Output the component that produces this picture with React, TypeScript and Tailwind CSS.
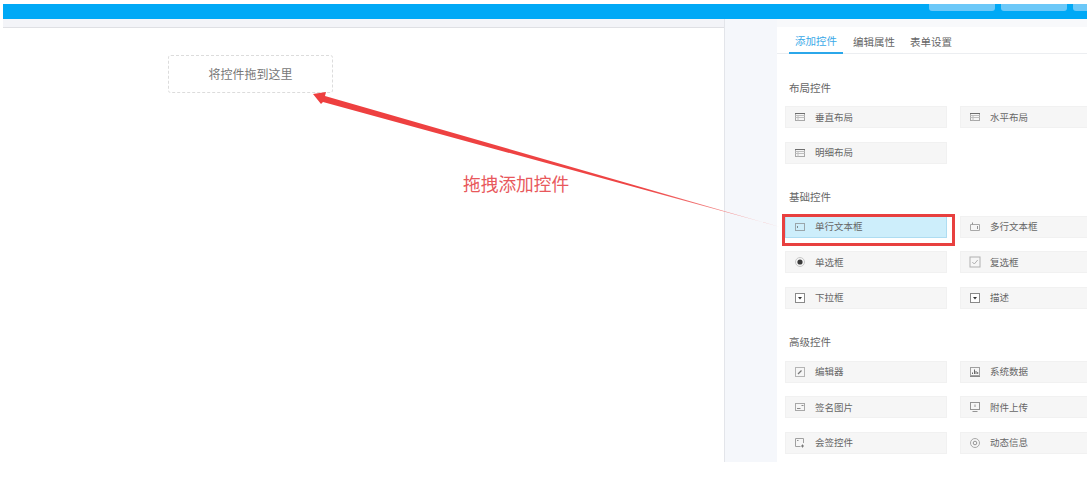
import React from "react";

type Item = { label: string; icon: string; active?: boolean };

const sections: { title: string; items: Item[] }[] = [
  {
    title: "布局控件",
    items: [
      { label: "垂直布局", icon: "table" },
      { label: "水平布局", icon: "table" },
      { label: "明细布局", icon: "table" },
    ],
  },
  {
    title: "基础控件",
    items: [
      { label: "单行文本框", icon: "input", active: true },
      { label: "多行文本框", icon: "textarea" },
      { label: "单选框", icon: "radio" },
      { label: "复选框", icon: "checkbox" },
      { label: "下拉框", icon: "select" },
      { label: "描述", icon: "select" },
    ],
  },
  {
    title: "高级控件",
    items: [
      { label: "编辑器", icon: "editor" },
      { label: "系统数据", icon: "chart" },
      { label: "签名图片", icon: "sign" },
      { label: "附件上传", icon: "monitor" },
      { label: "会签控件", icon: "countersign" },
      { label: "动态信息", icon: "target" },
    ],
  },
];

function ItemIcon({ name }: { name: string }) {
  const common = { fill: "none", stroke: "#929292", strokeWidth: 1 };
  return (
    <svg width="12" height="12" viewBox="0 0 12 12" className="shrink-0">
      {name === "table" && (
        <g {...common}>
          <rect x="1.5" y="2.5" width="9" height="7" stroke="#a8a8a8" />
          <path d="M1 2.5h10" stroke="#6e6e6e" />
          <path d="M1.5 4.5h9M1.5 6.5h9M4 4.5v5" stroke="#c0c0c0" />
        </g>
      )}
      {name === "input" && (
        <g {...common}>
          <rect x="1.5" y="2.5" width="9" height="7" stroke="#9aa6ab" />
          <path d="M3.5 5v2" stroke="#7c8a90" />
        </g>
      )}
      {name === "textarea" && (
        <g {...common}>
          <path d="M1.5 3.5h9v6h-9z" stroke="#a8a8a8" />
          <path d="M3.5 1.5v2M8.5 5v3" />
        </g>
      )}
      {name === "radio" && (
        <g>
          <circle cx="6" cy="6" r="4.5" fill="none" stroke="#c8c8c8" />
          <circle cx="6" cy="6" r="2.6" fill="#3a3a3a" />
        </g>
      )}
      {name === "checkbox" && (
        <g {...common}>
          <rect x="1" y="1" width="10" height="10" stroke="#b0b0b0" />
          <path d="M3.3 6l2 2 3.4-4" stroke="#b0b0b0" />
        </g>
      )}
      {name === "select" && (
        <g>
          <rect x="1.5" y="1.5" width="9" height="9" fill="#fff" stroke="#8a8a8a" />
          <path d="M4 5h4L6 7.5z" fill="#333" />
        </g>
      )}
      {name === "editor" && (
        <g {...common}>
          <rect x="1.5" y="1.5" width="9" height="9" stroke="#b4b4b4" />
          <path d="M4 8l3.5-3.5" stroke="#777" strokeWidth="1.2" />
        </g>
      )}
      {name === "chart" && (
        <g {...common}>
          <rect x="1.5" y="1.5" width="9" height="8" stroke="#a0a0a0" />
          <path d="M3.5 8V6.5M5.5 8V3.5M7 8V5M8.7 8V6" stroke="#666" />
          <path d="M1 10.5h10" stroke="#888" />
        </g>
      )}
      {name === "sign" && (
        <g {...common}>
          <rect x="1.5" y="2.5" width="9" height="7" stroke="#a8a8a8" />
          <path d="M3 7.5h3.5M7.5 4.5h2" stroke="#8a8a8a" />
        </g>
      )}
      {name === "monitor" && (
        <g {...common}>
          <rect x="1.5" y="1.5" width="9" height="7" stroke="#949494" />
          <path d="M6 3.5v2.5M3.5 10.5h5" stroke="#949494" />
        </g>
      )}
      {name === "countersign" && (
        <g {...common}>
          <path d="M6.5 9.5h-5v-8h8V6" stroke="#a0a0a0" />
          <path d="M8.5 7.5v3M7 9h3" stroke="#777" />
          <path d="M3 3.5h1.5" />
        </g>
      )}
      {name === "target" && (
        <g {...common}>
          <circle cx="6" cy="6" r="4.5" stroke="#a8a8a8" />
          <circle cx="6" cy="6" r="1.8" stroke="#949494" />
        </g>
      )}
    </svg>
  );
}

function ControlItem({ item }: { item: Item }) {
  return (
    <div
      className={`relative flex h-[22px] items-center border pl-[8px] ${
        item.active
          ? "border-[#aeddf2] bg-[#cdeefb]"
          : "border-[#f1f1f1] bg-[#f6f6f6]"
      }`}
    >
      <ItemIcon name={item.icon} />
      <span className="ml-[9px] text-[9.5px] text-[#666]">{item.label}</span>
      {item.active && (
        <div className="absolute -left-[4px] -top-[3px] h-[32px] w-[173px] border-[3px] border-[#e8403f]" />
      )}
    </div>
  );
}

export default function App() {
  return (
    <div className="relative h-[495px] w-[1087px] overflow-hidden bg-white pt-[4px] font-['Noto_Sans_CJK_SC','Liberation_Sans',sans-serif]">
      <div className="ml-[3px] flex h-[15px] justify-end gap-[6px] bg-[#00a9f6]">
        <div className="h-[7px] w-[66px] rounded-b-[3px] bg-[#6cc8f8]" />
        <div className="h-[7px] w-[66px] rounded-b-[3px] bg-[#6cc8f8]" />
        <div className="h-[7px] w-[14px] rounded-bl-[3px] bg-[#6cc8f8]" />
      </div>
      <div className="ml-[3px] flex h-[443px]">
        <div className="flex w-[722px] flex-col border-r border-[#e3e5ea]">
          <div className="h-[9px] border-b border-[#dfe0e4] bg-[#f3f4f8]" />
          <div className="pl-[165px] pt-[27px]">
            <div className="flex h-[38px] w-[165px] items-center justify-center rounded-[3px] border-[1.5px] border-dashed border-[#dcdcdc] text-[12px] text-[#777]">
              将控件拖到这里
            </div>
          </div>
        </div>
        <div className="w-[52px] bg-[#f5f7fb]" />
        <div className="flex-1 overflow-hidden bg-white">
          <div className="h-[8px] bg-[#f8f9fb]" />
          <div className="flex h-[27px] items-end border-b border-[#eceef1] pl-[12px] text-[10.5px] text-[#666]">
            <div className="-mb-px border-b-2 border-[#2ba7ea] px-[6px] pb-[3px] leading-[16px] text-[#3aa9e8]">
              添加控件
            </div>
            <div className="ml-[10px] pb-[3px] leading-[16px]">编辑属性</div>
            <div className="ml-[15px] pb-[3px] leading-[16px]">表单设置</div>
          </div>
          <div className="pl-[8px] pt-[26px]">
            {sections.map((section, i) => (
              <div
                key={section.title}
                className={i === 0 ? "" : "mt-[25px]"}
              >
                <div className="ml-[4px] h-[16px] text-[10.5px] leading-[16px] text-[#666]">
                  {section.title}
                </div>
                <div className={`grid w-[340px] grid-cols-[162px_162px] gap-x-[13px] gap-y-[13.5px] ${i === 0 ? "mt-[10px]" : "mt-[11px]"}`}>
                  {section.items.map((item) => (
                    <ControlItem key={item.label} item={item} />
                  ))}
                </div>
              </div>
            ))}
          </div>
        </div>
      </div>

      {/* annotation arrow, drawn over the page */}
      <svg
        width="1087"
        height="495"
        className="pointer-events-none absolute left-0 top-0"
      >
        <defs>
          <linearGradient
            id="arrowFade"
            gradientUnits="userSpaceOnUse"
            x1="320"
            y1="97"
            x2="780"
            y2="227"
          >
            <stop offset="0" stopColor="#ee3f3f" />
            <stop offset="0.7" stopColor="#ee4545" />
            <stop offset="1" stopColor="#f4b0b0" />
          </linearGradient>
        </defs>
        <polygon
          points="313,94 326,92 325,96 780,227 323,102 321,104"
          fill="url(#arrowFade)"
        />
      </svg>
      <div className="absolute left-[463px] top-[170px] text-[17.7px] leading-[26px] text-[#e8585c]">
        拖拽添加控件
      </div>
    </div>
  );
}
